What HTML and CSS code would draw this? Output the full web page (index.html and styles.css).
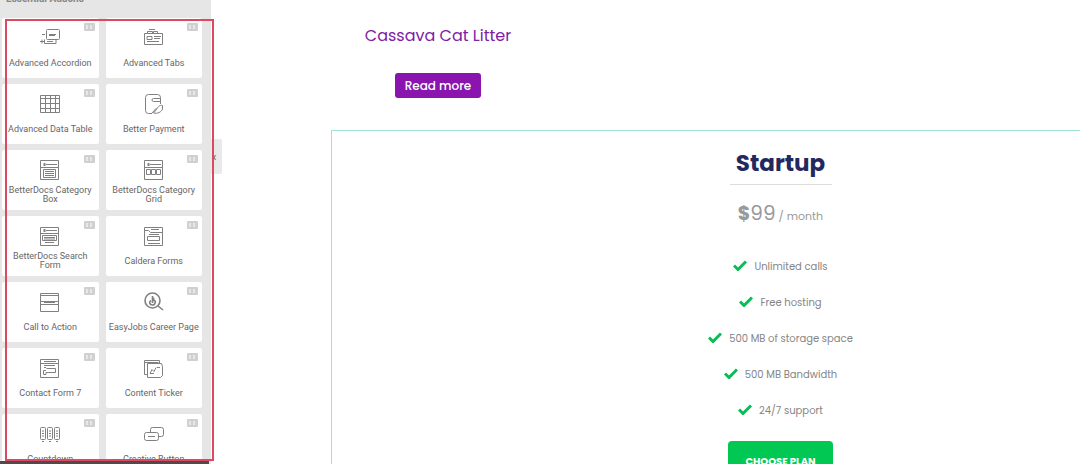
FILE: index.html
```
<!DOCTYPE html>
<html lang="en">
<head>
    <meta charset="UTF-8">
    <meta name="viewport" content="width=device-width, initial-scale=1.0">
    <title>Cassava Cat Litter</title>
    <link rel="stylesheet" href="styles.css">
</head>
<body>
    <aside class="panel">
        <h2 class="panel-title">Essential Addons</h2>

        <div class="widgets">
            <div class="widget">
                <span class="badge"></span>
                <svg viewBox="0 0 20 20"><rect x="6.500" y="1.500" width="13" height="10" rx="1"/><path d="M16 11.500v4H4.500v-4M9 6.500h7M9 7.500h6M7 13.500h6M2 6.500h3M0 13.500h4M2 11.500v4"/></svg>
                <span class="label">Advanced Accordion</span>
            </div>
            <div class="widget">
                <span class="badge"></span>
                <svg viewBox="0 0 20 20"><path d="M.5 5.500h18v11H.5zM3.500 5V3.500h5V5M9.500 5V3.500h4V5M5 1.500h6M3 8.500h5v3H3zM10 8.500h7M10 10.500h6M3 13.500h12"/></svg>
                <span class="label">Advanced Tabs</span>
            </div>
            <div class="widget">
                <span class="badge"></span>
                <svg viewBox="0 0 20 20"><path d="M.5 1.500h19v17H.5zM.5 4.500h19M.5 9.500h19M.5 14.500h19M5.500 1.500v17M10.500 1.500v17M15.500 1.500v17"/></svg>
                <span class="label">Advanced Data Table</span>
            </div>
            <div class="widget">
                <span class="badge"></span>
                <svg viewBox="0 0 20 20"><path d="M16.500 10V3.500a3 3 0 0 0-3-3h-9a3 3 0 0 0-3 3v13a3 3 0 0 0 3 3H8M16.500 4.500h-7a1.500 1.500 0 0 0 0 3h7M18.500 11.500c-3-1-5 2-6 4l-3 3.500c4 1 8-1 9-4zM8 19l4.500-5"/></svg>
                <span class="label">Better Payment</span>
            </div>
            <div class="widget">
                <span class="badge"></span>
                <svg viewBox="0 0 20 20"><path d="M.5.5h18v19H.5zM.5 7.500h18M6 4.500h11M3.500 9.500h12v8h-12zM5 11.500h9M5 13.500h9M5 15.500h9"/><path d="M3.500 4.500h2" stroke-width="3"/></svg>
                <span class="label">BetterDocs Category Box</span>
            </div>
            <div class="widget">
                <span class="badge"></span>
                <svg viewBox="0 0 20 20"><path d="M.5.500h18v19H.5zM.5 7.500h18M6 4.500h11M2.500 9.500h4v5h-4zM7.500 9.500h4v5h-4zM12.500 9.500h4v5h-4z"/><path d="M3.500 4.500h2" stroke-width="3"/></svg>
                <span class="label">BetterDocs Category Grid</span>
            </div>
            <div class="widget">
                <span class="badge"></span>
                <svg viewBox="0 0 20 20"><path d="M.5 1.500h18v18H.5zM.5 7.500h18M6 4.500h11M2.500 9.500h14v5h-14zM4 11.500h11M4 13h11M5 16.500h9"/><path d="M3.500 4.500h2" stroke-width="3"/></svg>
                <span class="label">BetterDocs Search Form</span>
            </div>
            <div class="widget">
                <span class="badge"></span>
                <svg viewBox="0 0 20 20"><path d="M.5 1.500h18v18H.5zM.5 4.500h4l2 2h12M7 3.500h8M3.500 10.500h12v4h-12zM5 8.500h10M4 17.500h12"/></svg>
                <span class="label">Caldera Forms</span>
            </div>
            <div class="widget">
                <span class="badge"></span>
                <svg viewBox="0 0 20 20"><path d="M.5 1.500h18v18H.5zM.5 3.500h18M.5 9.500h18M.5 12.500h18M4 10.500h11"/></svg>
                <span class="label">Call to Action</span>
            </div>
            <div class="widget">
                <span class="badge"></span>
                <svg viewBox="0 0 20 20"><circle cx="8.500" cy="8.500" r="7.500" stroke-width="1.600"/><path d="M8.500 4v7M8.500 5.500c1.500 1 1.500 2 1 3 3-.5 2 4.500-1 4.500s-4-3-1.500-4.500M14 14l5 4" stroke-width="1.600"/></svg>
                <span class="label">EasyJobs Career Page</span>
            </div>
            <div class="widget">
                <span class="badge"></span>
                <svg viewBox="0 0 20 20"><path d="M.5 1.500h18v18H.5zM.5 5.500h18M4 3.500h12M4 7.500h11M4 9.500h2M15.500 14.500v-4h-9M15.500 14.500H6v2H3.500v-4H6"/></svg>
                <span class="label">Contact Form 7</span>
            </div>
            <div class="widget">
                <span class="badge"></span>
                <svg viewBox="0 0 20 20"><path d="M3 16.500H.5v-14h15v3M.5 4.500h14M3.500 5.500h14l1 3v9l-2 2h-13zM6 15.500l2-4 2 2 2-4M13 9.500h3M6 15.500h4"/></svg>
                <span class="label">Content Ticker</span>
            </div>
            <div class="widget">
                <span class="badge"></span>
                <svg viewBox="0 0 20 20"><rect x=".5" y="3.500" width="5" height="12" rx="1"/><rect x="7.500" y="3.500" width="5" height="12" rx="1"/><rect x="14.500" y="3.500" width="5" height="12" rx="1"/><path d="M2 9.500h2M9 9.500h2M16 9.500h2M3 6v2M10 6v2M17 6v2M3 11v2M10 11v2M17 11v2M2 17.500h2M9 17.500h2M16 17.500h2"/></svg>
                <span class="label">Countdown</span>
            </div>
            <div class="widget">
                <span class="badge"></span>
                <svg viewBox="0 0 20 20"><rect x=".5" y="8.500" width="14" height="8" rx="2"/><path d="M6.500 8V5.500a2 2 0 0 1 2-2h9a2 2 0 0 1 2 2v5a2 2 0 0 1-2 2H15M4 12.500h7"/></svg>
                <span class="label">Creative Button</span>
            </div>
        </div>

        <div class="highlight"></div>
        <div class="panel-footer"></div>
        <button class="collapse" aria-label="Hide panel">&lsaquo;</button>
    </aside>

    <main class="preview">
        <div class="product">
            <h3>Cassava Cat Litter</h3>
            <button class="read-more">Read more</button>
        </div>

        <section class="pricing">
            <h2>Startup</h2>
            <p class="price"><b>$</b><span class="amount">99</span> / month</p>
            <ul class="features">
                <li><svg viewBox="0 0 14 11"><path d="M1 5.500l4 4 8-8"/></svg>Unlimited calls</li>
                <li><svg viewBox="0 0 14 11"><path d="M1 5.500l4 4 8-8"/></svg>Free hosting</li>
                <li><svg viewBox="0 0 14 11"><path d="M1 5.500l4 4 8-8"/></svg>500 MB of storage space</li>
                <li><svg viewBox="0 0 14 11"><path d="M1 5.500l4 4 8-8"/></svg>500 MB Bandwidth</li>
                <li><svg viewBox="0 0 14 11"><path d="M1 5.500l4 4 8-8"/></svg>24/7 support</li>
            </ul>
            <button class="choose">CHOOSE PLAN</button>
        </section>
    </main>
</body>
</html>
```
FILE: styles.css
```
* {
    box-sizing: border-box;
}

body {
    margin: 0;
    height: 100vh;
    display: flex;
    overflow: hidden;
    background: #fff;
    font-family: Poppins, Inter, sans-serif;
}

h2, h3, p, ul {
    margin: 0;
    padding: 0;
}

button {
    border: none;
    font-family: inherit;
    cursor: pointer;
}

/* left panel */
.panel {
    position: relative;
    flex: 0 0 211px;
    height: 100%;
    background: #e6e6e6;
    font-family: Roboto, sans-serif;
}

.panel-title {
    height: 26px;
    margin-top: -8px;
    padding-left: 6px;
    color: #888;
    font-size: 10px;
    font-weight: 700;
    line-height: 14px;
}

.widgets {
    display: grid;
    grid-template-columns: 1fr 1fr;
    grid-auto-rows: 60px;
    gap: 6px 7px;
    height: calc(100% - 18px);
    padding: 0 9px 0 2px;
    overflow: hidden;
}

.widget {
    position: relative;
    display: flex;
    flex-direction: column;
    align-items: center;
    padding-top: 10px;
    background: #fff;
    border-radius: 2px;
}

.widget svg {
    flex: none;
    width: 20px;
    height: 20px;
    fill: none;
    stroke: #808080;
    stroke-width: 1;
}

.label {
    flex: 1;
    display: flex;
    align-items: center;
    padding: 0 2px;
    color: #666;
    font-size: 9px;
    line-height: 9px;
    text-align: center;
}

.badge {
    position: absolute;
    top: 5px;
    right: 4px;
    width: 11px;
    height: 8px;
    border: 2px solid #d0d0d0;
    border-radius: 1px;
    background: repeating-linear-gradient(90deg, #e8e8e8 0 2px, #d0d0d0 2px 4px);
}

.highlight {
    position: absolute;
    z-index: 3;
    top: 19px;
    bottom: 3px;
    left: 5px;
    right: -3px;
    border: 2px solid #dc4a62;
    pointer-events: none;
}

.panel-footer {
    position: absolute;
    bottom: 0;
    left: 0;
    right: 2px;
    height: 3px;
    background: #55474b;
}

.collapse {
    position: absolute;
    z-index: 2;
    top: 139px;
    left: 100%;
    width: 11px;
    height: 35px;
    padding: 0 4px 0 0;
    border-radius: 0 2px 2px 0;
    background: #e9e9e9;
    color: #555;
    font-size: 12px;
}

/* page preview */
.preview {
    flex: 1;
    min-width: 0;
    padding-left: 120px;
}

.product {
    width: 214px;
    height: 130px;
    padding-top: 24px;
    text-align: center;
}

.product h3 {
    color: #7d22a5;
    font-size: 16px;
    font-weight: 400;
    line-height: 24px;
}

.read-more {
    width: 86px;
    height: 25px;
    margin-top: 25px;
    padding: 0;
    border-radius: 3px;
    background: #8a14ae;
    color: #fff;
    font-size: 12px;
    font-weight: 500;
}

.pricing {
    display: flex;
    flex-direction: column;
    align-items: center;
    padding: 16px 0 0 149px;
    border: 1px solid #9fe3d2;
    border-width: 1px 0 0 1px;
    color: #858585;
}

.pricing h2 {
    width: 102px;
    height: 38px;
    border-bottom: 1px solid #ddd;
    color: #23285f;
    font-size: 23px;
    line-height: 32px;
    text-align: center;
}

.price {
    margin-top: 12px;
    color: #999;
    font-size: 11px;
    line-height: 32px;
}

.price b {
    font-size: 19px;
}

.amount {
    font-size: 20px;
}

.features {
    margin-top: 17px;
    list-style: none;
    font-size: 10px;
}

.features li {
    display: flex;
    justify-content: center;
    height: 36px;
    line-height: 36px;
}

.features svg {
    width: 14px;
    height: 11px;
    margin: 11px 7px 0 0;
    fill: none;
    stroke: #07bd55;
    stroke-width: 3;
}

.choose {
    width: 105px;
    height: 41px;
    margin-top: 12px;
    padding: 0;
    border-radius: 4px;
    background: #00c853;
    color: #fff;
    font-size: 10px;
    font-weight: 700;
}
```
